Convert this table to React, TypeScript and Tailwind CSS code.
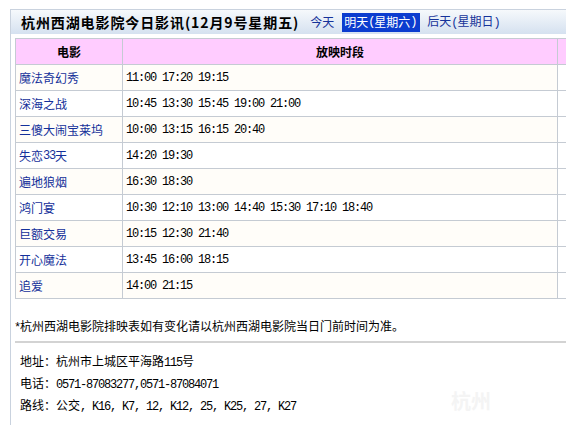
import React from "react";

const cjk = "font-['Noto_Sans_CJK_SC','Noto_Sans',sans-serif]";
const mono = "font-['Liberation_Mono','DejaVu_Sans_Mono',monospace] tracking-[-1.2px]";

function A({ children }: { children: React.ReactNode }) {
  return <span className={mono}>{children}</span>;
}

const rows: [string, string][] = [
  ["魔法奇幻秀", "11:00 17:20 19:15"],
  ["深海之战", "10:45 13:30 15:45 19:00 21:00"],
  ["三傻大闹宝莱坞", "10:00 13:15 16:15 20:40"],
  ["失恋33天", "14:20 19:30"],
  ["遍地狼烟", "16:30 18:30"],
  ["鸿门宴", "10:30 12:10 13:00 14:40 15:30 17:10 18:40"],
  ["巨额交易", "10:15 12:30 21:40"],
  ["开心魔法", "13:45 16:00 18:15"],
  ["追爱", "14:00 21:15"],
];

function Name({ s }: { s: string }) {
  const m = s.match(/^(.*?)(\d+)(.*)$/);
  if (!m) return <>{s}</>;
  return (
    <>
      {m[1]}
      <A>{m[2]}</A>
      {m[3]}
    </>
  );
}

export default function App() {
  return (
    <div className={`relative w-[566px] h-[425px] overflow-hidden bg-white text-[12px] text-black ${cjk}`}>
      <div className="ml-[10px] mt-[9px] h-[416px] border-l border-t border-[#c9d2de]">
        {/* header bar */}
        <div className="h-[24px] flex items-center pl-[10px] bg-gradient-to-b from-[#f6f9fc] to-[#d5e1f0] whitespace-nowrap">
          <span className="text-[14px] font-bold leading-[14px] tracking-[0.9px]">
            杭州西湖电影院今日影讯(12月9号星期五)
          </span>
          <span className="ml-[11px] text-[#16339a] leading-[14px]">今天</span>
          <span className="ml-[8px] h-[19px] flex items-center pl-[2px] pr-[4px] bg-[#0b3ccf] text-white leading-[14px]">
            明天<A>(</A>星期六<A>)</A>
          </span>
          <span className="ml-[7px] text-[#16339a] leading-[14px]">
            后天<A>(</A>星期日<A>)</A>
          </span>
        </div>

        {/* table */}
        <div className="mt-[4px] ml-[4px]">
          <div className="flex h-[27px] border-t border-b border-[#c5cbd3] bg-[#ffccff] font-bold">
            <div className="w-[108px] border-l border-r border-[#c5cbd3] flex items-center justify-center">
              电影
            </div>
            <div className="w-[435px] border-r border-[#c5cbd3] flex items-center justify-center">
              放映时段
            </div>
            <div className="flex-1" />
          </div>
          {rows.map(([n, t], i) => (
            <div key={n} className="flex h-[26px] border-b border-[#c5cbd3]">
              <div
                className={`w-[108px] border-l border-r border-[#c5cbd3] flex items-center pl-[3px] text-[#14309a] ${
                  i % 2 === 0 ? "bg-[#fffdf9]" : "bg-white"
                }`}
              >
                <Name s={n} />
              </div>
              <div
                className={`w-[435px] border-r border-[#c5cbd3] flex items-center pl-[3px] ${
                  i % 2 === 0 ? "bg-[#fffdf9]" : "bg-white"
                }`}
              >
                <span className={`${mono} text-[12px]`}>{t}</span>
              </div>
              <div className="flex-1" />
            </div>
          ))}
        </div>

        {/* note */}
        <div className="h-[42px] pt-[20px] pl-[3px] leading-[14px] whitespace-nowrap">
          <A>*</A>杭州西湖电影院排映表如有变化请以杭州西湖电影院当日门前时间为准。
        </div>
        <div className="ml-[4px] h-[2px] bg-[#d3d3d3]" />

        {/* address */}
        <div className="relative pt-[8px] pl-[9px] leading-[20px] whitespace-nowrap">
          <div>
            地址：杭州市上城区平海路<A>115</A>号
          </div>
          <div>
            电话：<A>0571-87083277,0571-87084071</A>
          </div>
          <div>
            路线：公交<A>, K16, K7, 12, K12, 25, K25, 27, K27</A>
          </div>
          <div className="absolute left-[440px] top-[48px] text-[20px] font-bold text-[#f4f4f4] leading-[20px]">
            杭州
          </div>
        </div>
      </div>
    </div>
  );
}
